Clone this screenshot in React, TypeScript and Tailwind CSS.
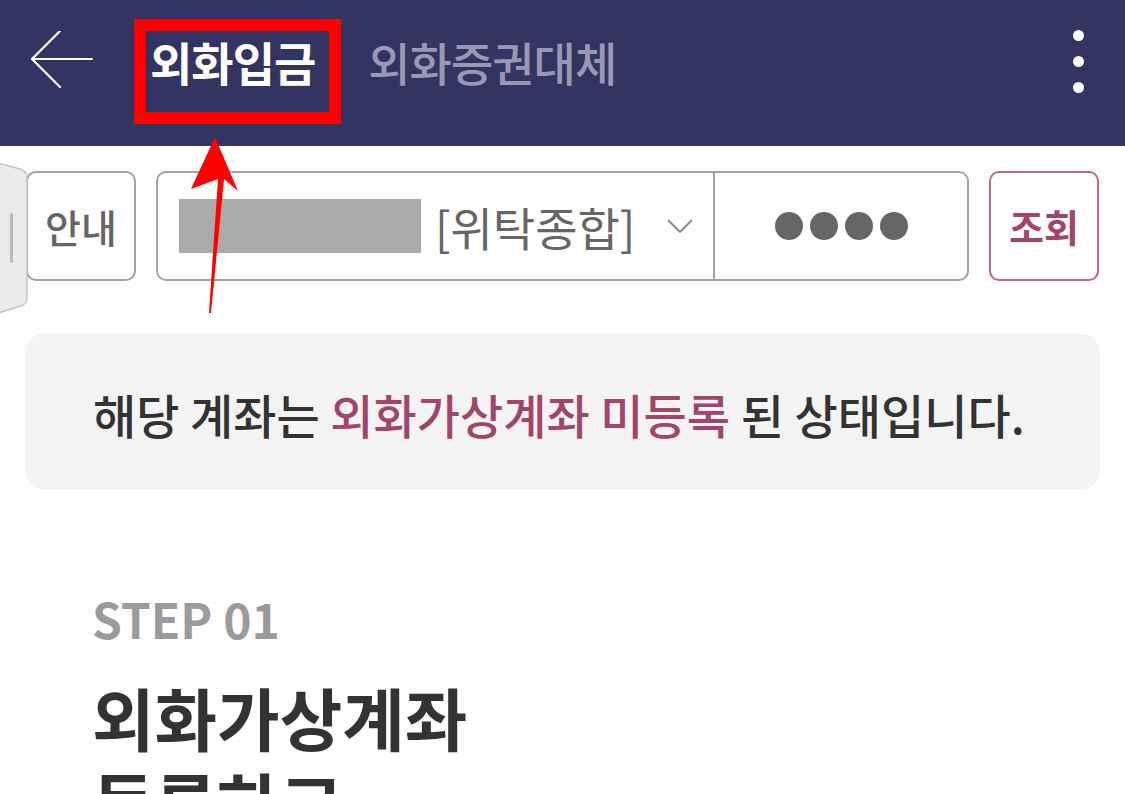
const font = "font-['Noto_Sans_CJK_KR','Noto_Sans',sans-serif]";

function BackArrow() {
    return (
        <svg width="64" height="60" viewBox="0 0 64 60" className="shrink-0">
            <path d="M2 28 H62 M2 28 L30 0 M2 28 L30 56" stroke="#fff" strokeWidth="2.2" fill="none" strokeLinecap="round" />
        </svg>
    );
}

function SideHandle() {
    return (
        <svg width="30" height="156" viewBox="0 0 30 156" className="absolute left-0 top-[160px]">
            <path d="M-2 3 L20 9 Q27 11 27 18 V138 Q27 144 21 146 L-2 153 Z" fill="#ebebeb" stroke="#c6c6c6" strokeWidth="1.5" />
            <rect x="10" y="53" width="3" height="50" rx="1.5" fill="#b9b9b9" />
        </svg>
    );
}

function RedArrow() {
    return (
        <svg width="60" height="190" viewBox="0 0 60 190" className="absolute left-[180px] top-[130px]">
            <path d="M35 7 L58 61 L44 49 L31 183 L29 183 L38 49 L11 59 Z" fill="#ff0000" />
        </svg>
    );
}

export default function App() {
    return (
        <div className={`relative h-[794px] w-[1125px] overflow-hidden bg-white ${font}`}>
            <header className="flex h-[146px] items-center bg-[#343463] pb-[24px] pl-[30px] pr-[41px]">
                <BackArrow />
                <div className="relative ml-[56px]">
                    <span className="block text-[46px] font-bold leading-none tracking-[-1px] text-white">외화입금</span>
                    <div className="absolute -bottom-[40px] -left-[16px] -right-[26px] -top-[19px] border-[12px] border-[#ff0000]" />
                </div>
                <span className="ml-[53px] text-[46px] font-medium leading-none tracking-[-1px] text-[#9a99b5]">외화증권대체</span>
                <div className="ml-auto flex flex-col gap-[15px]">
                    <span className="h-[11px] w-[11px] rounded-full bg-white" />
                    <span className="h-[11px] w-[11px] rounded-full bg-white" />
                    <span className="h-[11px] w-[11px] rounded-full bg-white" />
                </div>
            </header>

            <div className="mt-[25px] flex gap-[20px] pl-[26px]">
                <button className="flex h-[110px] w-[110px] items-center justify-center rounded-[10px] border-2 border-[#a3a3a3] bg-white text-[39px] font-medium leading-none text-[#666]">
                    안내
                </button>
                <div className="flex h-[110px] w-[813px] rounded-[10px] border-2 border-[#a3a3a3]">
                    <div className="flex w-[555px] items-center pl-[21px] pr-[20px]">
                        <span className="h-[54px] w-[242px] bg-[#aaaaaa]" />
                        <span className="ml-[14px] text-[46px] leading-none text-[#666]">[위탁종합]</span>
                        <svg width="26" height="14" viewBox="0 0 26 14" className="ml-auto">
                            <path d="M1 1 L13 13 L25 1" stroke="#888" strokeWidth="1.8" fill="none" />
                        </svg>
                    </div>
                    <div className="flex flex-1 items-center justify-center gap-[7px] border-l-2 border-[#a3a3a3]">
                        <span className="h-[28px] w-[28px] rounded-full bg-[#666]" />
                        <span className="h-[28px] w-[28px] rounded-full bg-[#666]" />
                        <span className="h-[28px] w-[28px] rounded-full bg-[#666]" />
                        <span className="h-[28px] w-[28px] rounded-full bg-[#666]" />
                    </div>
                </div>
                <button className="flex h-[110px] w-[110px] items-center justify-center rounded-[10px] border-2 border-[#b9678a] bg-white text-[38px] font-bold leading-none text-[#a3446b]">
                    조회
                </button>
            </div>

            <div className="mx-[25px] mt-[52px] flex h-[157px] items-center rounded-[20px] bg-[#f4f4f4] pl-[68px] pt-[4px]">
                <p className="text-[47px] font-medium leading-none text-[#333]">
                    해당 계좌는 <span className="text-[#a3446b]">외화가상계좌 미등록</span> 된 상태입니다.
                </p>
            </div>

            <div className="pl-[92px] pt-[104px]">
                <p className="text-[48px] font-semibold leading-none text-[#9b9b9b]">STEP 01</p>
                <h1 className="mt-[32px] text-[68px] font-bold leading-[85px] text-[#333]">
                    <span className="block">외화가상계좌</span>
                    <span className="block">등록하고</span>
                </h1>
            </div>

            <SideHandle />
            <RedArrow />
        </div>
    );
}
